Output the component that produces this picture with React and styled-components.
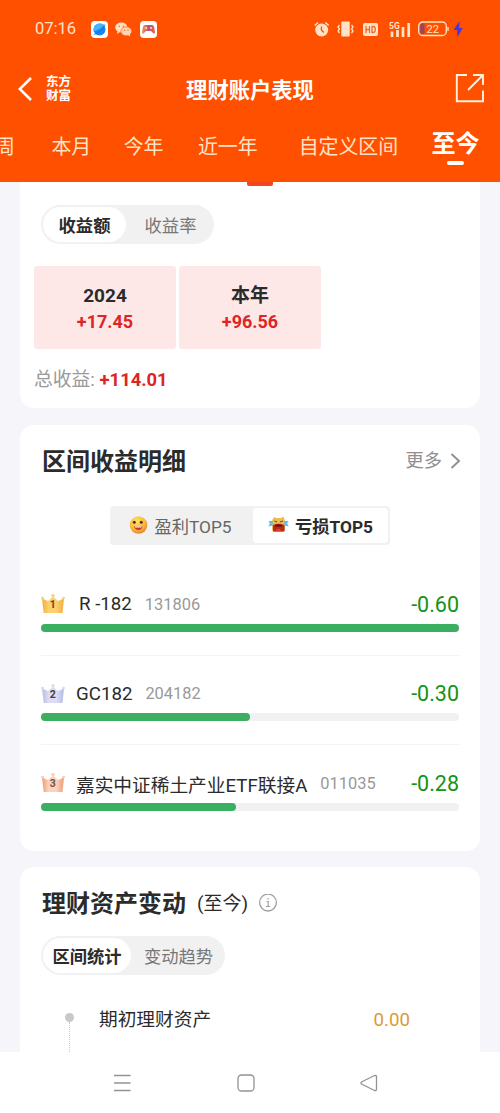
import React from 'react';
import styled, { createGlobalStyle } from 'styled-components';

const colors = {
  brand: '#ff5000',
  page: '#f6f6fa',
  ink: '#2b2b2b',
  grey: '#999999',
  red: '#dd2525',
  pink: '#fde8e7',
  green: '#3cae61',
  greenText: '#159315',
  cream: '#ffe3c8',
};

const GlobalStyle = createGlobalStyle`
  * {
    box-sizing: border-box;
  }

  body {
    margin: 0;
    background: ${colors.page};
    font-family: Roboto, 'Noto Sans CJK SC', sans-serif;
    color: ${colors.ink};
  }
`;

const Screen = styled.div`
  width: 500px;
  height: 1113px;
  display: flex;
  flex-direction: column;
  overflow: hidden;
`;

const Header = styled.header`
  flex: none;
  height: 182px;
  background: ${colors.brand};
  color: #fff;
`;

const StatusBar = styled.div`
  height: 58px;
  padding: 0 37px 0 35px;
  display: flex;
  align-items: center;
  justify-content: space-between;
`;

const StatusGroup = styled.div`
  display: flex;
  align-items: center;
  gap: ${(props) => props.$gap}px;
`;

const Clock = styled.span`
  font-size: 16.5px;
  line-height: 20px;
  width: 48px;
  color: ${colors.cream};
`;

const TitleBar = styled.div`
  height: 62px;
  padding: 0 15px 0 18px;
  display: grid;
  grid-template-columns: 80px 1fr 80px;
  align-items: center;
`;

const Brand = styled.div`
  display: flex;
  align-items: center;
  gap: 14px;
`;

const BrandName = styled.div`
  width: 26px;
  margin-top: -3px;
  font-family: 'Noto Sans CJK SC', sans-serif;
  font-size: 12.5px;
  font-weight: 700;
  line-height: 13.5px;
`;

const PageTitle = styled.h1`
  margin: 3px 0 0 -3px;
  font-size: 21.3px;
  font-weight: 700;
  line-height: 30px;
  text-align: center;
  white-space: nowrap;
`;

const ShareButton = styled.div`
  display: flex;
  justify-content: flex-end;
  margin-top: -2px;
`;

const Tabs = styled.nav`
  height: 62px;
  display: flex;
  margin-left: -5px;
`;

const Tab = styled.div`
  flex: none;
  margin-right: ${(props) => props.$gap}px;
  padding-top: 12.5px;
  font-size: 19.9px;
  line-height: 30px;
  color: ${colors.cream};
`;

const ActiveTab = styled(Tab)`
  display: flex;
  flex-direction: column;
  align-items: center;
  padding-top: 9px;
  font-size: 24px;
  font-weight: 700;
  color: #fff;

  &::after {
    content: '';
    width: 17px;
    height: 4px;
    margin-top: 2px;
    border-radius: 2px;
    background: #fff;
  }
`;

const Content = styled.main`
  flex: 1;
  min-height: 0;
  overflow: hidden;
  padding: 0 20px;
  display: flex;
  flex-direction: column;
  gap: 16.5px;
`;

const Card = styled.section`
  flex: none;
  height: ${(props) => props.$height}px;
  padding: 0 21px;
  background: #fff;
  border-radius: ${(props) => (props.$attached ? '0 0 14px 14px' : '14px')};
`;

const Marker = styled.div`
  width: 26px;
  height: 4px;
  margin: 0 0 19px 206px;
  border-radius: 0 0 2px 2px;
  background: #ee4722;
`;

const Pill = styled.div`
  width: ${(props) => props.$width}px;
  height: 39px;
  padding: 2px;
  display: flex;
  border-radius: 20px;
  background: #f1f1f1;
`;

const PillItem = styled.div`
  flex: ${(props) => (props.$width ? 'none' : 1)};
  width: ${(props) => props.$width}px;
  padding: 1px 0 0 ${(props) => (props.$active ? 0 : 3)}px;
  border-radius: 18px;
  font-size: 17.3px;
  line-height: 36px;
  text-align: center;
  font-weight: ${(props) => (props.$active ? 700 : 400)};
  color: ${(props) => (props.$active ? colors.ink : '#777')};
  background: ${(props) => (props.$active ? '#fff' : 'transparent')};
`;

const YearGrid = styled.div`
  display: grid;
  grid-template-columns: 142px 142px;
  gap: 3px;
  margin: 22px 0 0 -7px;
`;

const YearBox = styled.div`
  height: 83px;
  padding-top: 17px;
  border-radius: 3px;
  background: ${colors.pink};
  text-align: center;
  font-weight: 700;
`;

const YearLabel = styled.div`
  font-size: 19px;
  line-height: 26px;
`;

const YearValue = styled.div`
  font-size: 18px;
  line-height: 25px;
  color: ${colors.red};
`;

const Total = styled.div`
  margin: 17px 0 0 -7px;
  font-size: 18.8px;
  line-height: 28px;
  color: ${colors.grey};

  b {
    font-size: 18.4px;
    color: ${colors.red};
  }
`;

const CardHead = styled.div`
  display: flex;
  align-items: center;
  height: ${(props) => props.$height}px;
  padding: ${(props) => props.$top}px 0 0 1px;
`;

const CardTitle = styled.h2`
  margin: 0;
  font-size: 24px;
  font-weight: 700;
  line-height: 36px;
`;

const More = styled.div`
  display: flex;
  align-items: center;
  gap: 8px;
  margin: -2px -2px 0 auto;
  font-size: 18.3px;
  line-height: 28px;
  color: #8f8f8f;
`;

const Range = styled.span`
  margin: 0 10px 0 11px;
  font-size: 19px;
  line-height: 30px;
`;

const Segmented = styled.div`
  width: 280px;
  height: 39px;
  margin: 8px auto 0;
  padding: 2px;
  display: grid;
  grid-template-columns: 141px 135px;
  border-radius: 4px;
  background: #f1f1f1;
`;

const Segment = styled.div`
  display: flex;
  align-items: center;
  justify-content: center;
  gap: 6px;
  padding-right: ${(props) => (props.$active ? 0 : 4)}px;
  border-radius: 4px;
  font-size: 17.3px;
  font-weight: ${(props) => (props.$active ? 700 : 400)};
  color: ${(props) => (props.$active ? colors.ink : '#666')};
  background: ${(props) => (props.$active ? '#fff' : 'transparent')};
`;

const FundList = styled.div`
  margin-top: 44.5px;
`;

const FundRow = styled.div`
  height: 89.6px;
`;

const FundLine = styled.div`
  display: flex;
  align-items: center;
  height: 30px;
  margin-bottom: 4.5px;
  white-space: pre;
`;

const FundName = styled.span`
  margin-left: ${(props) => props.$indent || 11}px;
  font-size: 18.7px;
`;

const FundCode = styled.span`
  margin-left: 13px;
  font-size: 16.4px;
  color: ${colors.grey};
`;

const FundValue = styled.span`
  margin-left: auto;
  font-size: 21.5px;
  color: ${colors.greenText};
`;

const Track = styled.div`
  height: 8px;
  border-radius: 4px;
  background: #f1f1f1;
`;

const Fill = styled.div`
  height: 100%;
  border-radius: 4px;
  background: ${colors.green};
`;

const Divider = styled.div`
  height: 1px;
  margin-top: 23px;
  background: #f3f3f3;
`;

const TimelineRow = styled.div`
  display: flex;
  align-items: flex-start;
  margin-top: 29.5px;
  padding: 0 49px 0 24px;
  font-size: 18.7px;
  line-height: 30px;
`;

const Timeline = styled.div`
  width: 9px;
  padding-top: 8px;
  margin-right: 25px;
  display: flex;
  flex-direction: column;
  align-items: center;

  &::before {
    content: '';
    width: 9px;
    height: 9px;
    border-radius: 50%;
    background: #c8c8c8;
  }

  &::after {
    content: '';
    height: 60px;
    border-left: 1px dotted #c8c8c8;
  }
`;

const Amount = styled.span`
  margin-left: auto;
  color: #dc9a35;
`;

const NavBar = styled.footer`
  flex: none;
  height: 61px;
  padding: 0 122px 0 113px;
  display: flex;
  align-items: center;
  justify-content: space-between;
  background: #fff;
`;

const BrowserIcon = () => (
  <svg width="17" height="17" viewBox="0 0 17 17">
    <rect width="17" height="17" rx="4" fill="#fff" />
    <circle cx="8.500" cy="8.500" r="6" fill="#1687ef" />
    <path d="M2.600 10.500C2 6 5 2.500 9 2.500C12 2.500 13.500 4 13.500 4C11 7 7 9 2.600 10.500Z" fill="#45b4f8" />
    <path d="M2.800 13.500C8 12 12.500 8 14 3.500" fill="none" stroke="#0b6fdb" strokeWidth="0.800" />
  </svg>
);

const WechatIcon = () => (
  <svg width="17" height="15" viewBox="0 0 17 15">
    <ellipse cx="6.300" cy="5.400" rx="6" ry="5" fill="#ffe0c5" />
    <path d="M2.500 9L2 12L5 10Z" fill="#ffe0c5" />
    <ellipse cx="11.300" cy="9.300" rx="5.400" ry="4.500" fill="#ffd3b4" stroke="#ff5000" strokeWidth="0.600" />
    <path d="M13 13L15 14.500L15 11.500Z" fill="#ffd3b4" />
    <g fill="#ff6a27">
      <circle cx="4.300" cy="4.300" r="0.800" />
      <circle cx="8.300" cy="4.300" r="0.800" />
      <circle cx="9.600" cy="8.300" r="0.700" />
      <circle cx="13" cy="8.300" r="0.700" />
    </g>
  </svg>
);

const GameIcon = () => (
  <svg width="17" height="17" viewBox="0 0 17 17">
    <defs>
      <linearGradient id="pad">
        <stop offset="0" stopColor="#f29a42" />
        <stop offset="0.500" stopColor="#c04f78" />
        <stop offset="1" stopColor="#f0633c" />
      </linearGradient>
    </defs>
    <rect width="17" height="17" rx="4" fill="#fff" />
    <path d="M5 4H12Q14 4 14.500 8L15 11.500Q14.500 13.500 13 12L11 10H6L4 12Q2.500 13.500 2 11.500L2.500 8Q3 4 5 4Z" fill="url(#pad)" />
    <path d="M4.800 7H7.200M6 5.800V8.200" stroke="#ffe1cf" strokeWidth="0.900" />
    <circle cx="11" cy="7" r="1" fill="#ffe1cf" />
  </svg>
);

const AlarmIcon = () => (
  <svg width="17" height="17" viewBox="0 0 17 17">
    <circle cx="7.700" cy="9" r="6.500" fill={colors.cream} />
    <path d="M0.700 4.500L4 1.500M14.700 4.500L11.400 1.500" stroke={colors.cream} strokeWidth="1.600" />
    <path d="M7.400 5.500V9L9.700 11.500" fill="none" stroke="#ff5000" strokeWidth="1.300" />
  </svg>
);

const VibrateIcon = () => (
  <svg width="20" height="16" viewBox="0 0 20 16">
    <rect x="4.300" y="0.500" width="8.400" height="15" rx="1" fill={colors.cream} />
    <path d="M2.500 4L1 6L2.500 8L1 10L2.500 12M14.500 4L16 6L14.500 8L16 10L14.500 12" fill="none" stroke={colors.cream} strokeWidth="1.300" />
  </svg>
);

const HdIcon = () => (
  <svg width="17" height="13" viewBox="0 0 17 13">
    <rect width="15" height="13" rx="2" fill={colors.cream} />
    <path d="M3 3V10M6.500 3V10M3 6.500H6.500M9 3.500V9.500H10.500Q12.300 9.300 12.300 6.500Q12.300 3.700 10.500 3.500Z" fill="none" stroke="#f2691f" strokeWidth="1.300" />
  </svg>
);

const SignalIcon = () => (
  <svg width="26" height="17" viewBox="-3 0 26 17">
    <text x="0" y="7.500" fontFamily="Roboto, sans-serif" fontSize="8.500" fontWeight="700" fill={colors.cream}>5G</text>
    <path d="M3 10.500V16M8.500 9V16M14 6V16M19.700 2V16" stroke={colors.cream} strokeWidth="2.700" />
  </svg>
);

const BatteryIcon = () => (
  <svg width="31" height="16" viewBox="0 0 31 16">
    <rect x="0.700" y="1" width="27.600" height="13.500" rx="4" fill="none" stroke={colors.cream} strokeWidth="1.300" />
    <path d="M6.500 2.500V13H5Q2.200 13 2.200 10V5.500Q2.200 2.500 5 2.500Z" fill="#9a4661" />
    <path d="M30 6V10" stroke={colors.cream} strokeWidth="1.300" />
    <text x="8.500" y="11.800" fontFamily="Roboto, sans-serif" fontSize="11" fill={colors.cream}>22</text>
  </svg>
);

const BoltIcon = () => (
  <svg width="8" height="16" viewBox="2 0 8 16" overflow="visible">
    <path d="M6.500 0L0.500 9H4L4.500 16L9.800 7H6.300Z" fill="#4d35dc" />
  </svg>
);

const BackIcon = () => (
  <svg width="14" height="24" viewBox="0 0 14 24">
    <path d="M13 1L1.800 12L13 23" fill="none" stroke="#fff" strokeWidth="2.600" />
  </svg>
);

const ShareIcon = () => (
  <svg width="30" height="30" viewBox="0 0 30 30">
    <path d="M12 2H1.800V28.200H28V17.500M18 2H28V12M28 2L13 17" fill="none" stroke="#fff0df" strokeWidth="1.900" />
  </svg>
);

const ChevronIcon = () => (
  <svg width="11" height="16" viewBox="0 0 11 16">
    <path d="M1.500 1L9 8L1.500 15" fill="none" stroke="#8f8f8f" strokeWidth="1.900" />
  </svg>
);

const SmileIcon = () => (
  <svg width="19" height="19" viewBox="0 0 19 19">
    <defs>
      <radialGradient id="smile" cx="0.400" cy="0.300" r="0.750">
        <stop offset="0" stopColor="#ffe45c" />
        <stop offset="0.600" stopColor="#fcb83e" />
        <stop offset="1" stopColor="#e47c36" />
      </radialGradient>
    </defs>
    <circle cx="9.500" cy="9" r="8.800" fill="url(#smile)" />
    <circle cx="5.300" cy="6.200" r="1.500" fill="#51311f" />
    <circle cx="12.300" cy="6.200" r="1.500" fill="#51311f" />
    <path d="M5 10Q9 11 13.500 10Q13 14 9.300 14Q5.700 14 5 10Z" fill="#c33a26" />
    <path d="M5.700 10.200Q9 11 12.800 10.200L12.300 11.500H6.200Z" fill="#fff" />
  </svg>
);

const CryIcon = () => (
  <svg width="21" height="18" viewBox="0 0 21 18">
    <path d="M4 4.500L6 1L8 2H13L15.500 0.500L17 5V14Q16 16 13 16H8Q5 16 4 14Z" fill="#eebc55" />
    <path d="M6.500 5L9 6M15 5L12 6" stroke="#76502b" strokeWidth="1.300" />
    <path d="M5 9Q10.500 6.500 16.500 9V15.500H5Z" fill="#b92a1c" />
    <path d="M7 9.200Q10.500 8 14 9.200V10.500H7Z" fill="#4e1a18" />
    <path d="M7.500 14.500Q10.500 11.500 13.500 14.500Z" fill="#f2573a" />
    <path d="M5 5.500Q2 4 0.500 6L2 7L0.300 10.500L4.500 9.500M16 5.500Q19 4 20.500 6L19 7L20.700 10.500L16.500 9.500" fill="#68b9df" />
  </svg>
);

const crownColors = {
  1: ['#fbd070', '#f5ac3c', '#704413'],
  2: ['#dcddf5', '#b5bbe4', '#44403c'],
  3: ['#fbd2bb', '#ec9c77', '#755044'],
};

const Crown = ({ rank }) => {
  const [light, dark, text] = crownColors[rank];
  return (
    <svg width="24" height="20" viewBox="0 0 24 20">
      <defs>
        <linearGradient id={`crown${rank}`}>
          <stop offset="0" stopColor={dark} />
          <stop offset="0.300" stopColor={light} />
          <stop offset="0.650" stopColor={light} />
          <stop offset="1" stopColor={dark} />
        </linearGradient>
      </defs>
      <g fill={`url(#crown${rank})`}>
        <path d="M1 4.500L7 7L12 2.500L17 7L23 4.500L21.500 19H2.700Z" />
        <circle cx="1.500" cy="4" r="1.200" />
        <circle cx="12" cy="1.600" r="1.500" />
        <circle cx="22.500" cy="4" r="1.200" />
      </g>
      <text x="11.800" y="14.300" textAnchor="middle" fontFamily="Roboto, sans-serif" fontSize="10.500" fontWeight="700" fill={text}>
        {rank}
      </text>
    </svg>
  );
};

const InfoIcon = () => (
  <svg width="20" height="20" viewBox="0 0 20 20">
    <circle cx="10" cy="8.600" r="8.400" fill="none" stroke="#a0a0a0" strokeWidth="1.300" overflow="visible" />
    <path d="M8.500 7.500H10.200V12.500M8 12.500H12.300M10 4V5.500" fill="none" stroke="#a0a0a0" strokeWidth="1.200" />
  </svg>
);

const MenuIcon = () => (
  <svg width="18" height="18" viewBox="0 0 18 18">
    <path d="M1 1.500H17.500M1 9H17.500M1 16.500H17.500" stroke="#929292" strokeWidth="1.300" />
  </svg>
);

const HomeIcon = () => (
  <svg width="18" height="18" viewBox="0 0 18 18">
    <rect x="1" y="1" width="16" height="16" rx="3.500" fill="none" stroke="#929292" strokeWidth="1.300" />
  </svg>
);

const ReturnIcon = () => (
  <svg width="18" height="18" viewBox="0 0 18 18">
    <path d="M1.500 8Q0.500 9 1.500 10L14.500 16.500Q16.500 17 16.500 15V3Q16.500 1 14.500 1.500Z" fill="none" stroke="#929292" strokeWidth="1.300" />
  </svg>
);

const tabs = [
  { label: '周', gap: 36.5 },
  { label: '本月', gap: 32.5 },
  { label: '今年', gap: 34.5 },
  { label: '近一年', gap: 41 },
  { label: '自定义区间', gap: 33.5 },
];

const years = [
  { label: '2024', value: '+17.45' },
  { label: '本年', value: '+96.56' },
];

const funds = [
  { name: 'R -182', code: '131806', value: '-0.60', percent: 100, indent: 14 },
  { name: 'GC182', code: '204182', value: '-0.30', percent: 50 },
  { name: '嘉实中证稀土产业ETF联接A', code: '011035', value: '-0.28', percent: 46.7 },
];

const App = () => (
  <Screen>
    <GlobalStyle />
    <Header>
      <StatusBar>
        <StatusGroup $gap={7.5}>
          <Clock>07:16</Clock>
          <BrowserIcon />
          <WechatIcon />
          <GameIcon />
        </StatusGroup>
        <StatusGroup $gap={6}>
          <AlarmIcon />
          <VibrateIcon />
          <HdIcon />
          <SignalIcon />
          <BatteryIcon />
          <BoltIcon />
        </StatusGroup>
      </StatusBar>
      <TitleBar>
        <Brand>
          <BackIcon />
          <BrandName>东方财富</BrandName>
        </Brand>
        <PageTitle>理财账户表现</PageTitle>
        <ShareButton>
          <ShareIcon />
        </ShareButton>
      </TitleBar>
      <Tabs>
        {tabs.map((tab) => (
          <Tab key={tab.label} $gap={tab.gap}>{tab.label}</Tab>
        ))}
        <ActiveTab $gap={0}>至今</ActiveTab>
      </Tabs>
    </Header>

    <Content>
      <Card $height={226} $attached>
        <Marker />
        <Pill $width={173}>
          <PillItem $active $width={83}>收益额</PillItem>
          <PillItem>收益率</PillItem>
        </Pill>
        <YearGrid>
          {years.map((year) => (
            <YearBox key={year.label}>
              <YearLabel>{year.label}</YearLabel>
              <YearValue>{year.value}</YearValue>
            </YearBox>
          ))}
        </YearGrid>
        <Total>
          总收益: <b>+114.01</b>
        </Total>
      </Card>

      <Card $height={426}>
        <CardHead $height={73} $top={2}>
          <CardTitle>区间收益明细</CardTitle>
          <More>
            更多
            <ChevronIcon />
          </More>
        </CardHead>
        <Segmented>
          <Segment>
            <SmileIcon />
            盈利TOP5
          </Segment>
          <Segment $active>
            <CryIcon />
            亏损TOP5
          </Segment>
        </Segmented>
        <FundList>
          {funds.map((fund, index) => (
            <FundRow key={fund.code}>
              <FundLine>
                <Crown rank={index + 1} />
                <FundName $indent={fund.indent}>{fund.name}</FundName>
                <FundCode>{fund.code}</FundCode>
                <FundValue>{fund.value}</FundValue>
              </FundLine>
              <Track>
                <Fill style={{ width: `${fund.percent}%` }} />
              </Track>
              {index < funds.length - 1 && <Divider />}
            </FundRow>
          ))}
        </FundList>
      </Card>

      <Card $height={260}>
        <CardHead $height={69} $top={5}>
          <CardTitle>理财资产变动</CardTitle>
          <Range>(至今)</Range>
          <InfoIcon />
        </CardHead>
        <Pill $width={184}>
          <PillItem $active $width={88}>区间统计</PillItem>
          <PillItem>变动趋势</PillItem>
        </Pill>
        <TimelineRow>
          <Timeline />
          <span>期初理财资产</span>
          <Amount>0.00</Amount>
        </TimelineRow>
      </Card>
    </Content>

    <NavBar>
      <MenuIcon />
      <HomeIcon />
      <ReturnIcon />
    </NavBar>
  </Screen>
);

export default App;
